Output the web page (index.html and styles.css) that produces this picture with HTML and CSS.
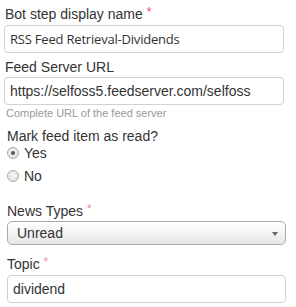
FILE: index.html
```html
<!DOCTYPE html>
<html lang="en">
<head>
    <meta charset="UTF-8">
    <title>Bot step settings</title>
    <link rel="stylesheet" href="styles.css">
</head>
<body>
    <div class="form">
        <div class="section top">
            <label class="field-label first">Bot step display name <span class="req">*</span></label>
            <input class="text-input alt" type="text" value="RSS Feed Retrieval-Dividends">

            <label class="field-label second">Feed Server URL</label>
            <input class="text-input url" type="text" value="https://selfoss5.feedserver.com/selfoss">
            <div class="help">Complete URL of the feed server</div>
        </div>

        <div class="section bottom">
            <div class="field-label mark">Mark feed item as read?</div>
            <div class="radio-row yes">
                <span class="radio checked"></span> Yes
            </div>
            <div class="radio-row no">
                <span class="radio"></span> No
            </div>

            <label class="field-label news">News Types <span class="req light">*</span></label>
            <div class="select">
                <span>Unread</span>
                <span class="arrow"></span>
            </div>

            <label class="field-label topic">Topic <span class="req light">*</span></label>
            <input class="text-input" type="text" value="dividend">
        </div>
    </div>
</body>
</html>
```

FILE: styles.css
```css
body {
    margin: 0;
    font-family: "Liberation Sans", Arial, sans-serif;
    color: #333;
    background: #fff;
}
.form {
    width: 296px;
}
.section.top {
    padding: 0 12px 0 4px;
}
.section.bottom {
    padding: 0 10px 0 7px;
}
.field-label {
    display: block;
    font-size: 14px;
    line-height: 16px;
    color: #333;
}
.field-label.first {
    padding-top: 6px;
    padding-left: 1px;
    margin-bottom: 3px;
}
.field-label.second {
    margin-top: 6px;
    margin-bottom: 2px;
    padding-left: 1px;
}
.field-label.mark {
    margin-top: 8px;
}
.field-label.news {
    margin-top: 19px;
    margin-bottom: 2px;
}
.field-label.topic {
    margin-top: 11px;
    margin-bottom: 3px;
}
.req {
    color: #e8476f;
    font-size: 12px;
    vertical-align: top;
    line-height: 12px;
}
.req.light {
    color: #f08aa2;
}
.text-input {
    display: block;
    box-sizing: border-box;
    width: 100%;
    height: 28px;
    margin: 0;
    padding: 0 6px 0 5px;
    border: 1px solid #d2d2d2;
    border-radius: 4px;
    font-family: "Liberation Sans", Arial, sans-serif;
    font-size: 14px;
    color: #333;
    background: #fff;
    outline: none;
}
.text-input.alt {
    font-family: "Open Sans", sans-serif;
    font-size: 13px;
    letter-spacing: -0.2px;
}
.help {
    font-size: 11px;
    line-height: 13px;
    color: #999;
    margin-top: 2px;
    padding-left: 2px;
}
.radio-row {
    display: flex;
    align-items: center;
    font-size: 14px;
    line-height: 16px;
    height: 16px;
    gap: 5px;
}
.radio-row.yes {
    margin-top: 1px;
}
.radio-row.no {
    margin-top: 7px;
}
.radio {
    box-sizing: border-box;
    width: 12px;
    height: 12px;
    border-radius: 50%;
    border: 1px solid #a9a9a9;
    background: radial-gradient(circle at 50% 40%, #f7f7f7, #dcdcdc);
    position: relative;
}
.radio.checked::after {
    content: "";
    position: absolute;
    left: 3px;
    top: 3px;
    width: 4px;
    height: 4px;
    border-radius: 50%;
    background: #555;
}
.select {
    box-sizing: border-box;
    height: 24px;
    border: 1px solid #aaa;
    border-radius: 5px;
    background: linear-gradient(#ffffff 0%, #f4f4f4 50%, #e6e6e6 100%);
    display: flex;
    align-items: center;
    justify-content: space-between;
    padding: 0 7px 0 9px;
    font-size: 14px;
    color: #333;
}
.arrow {
    width: 0;
    height: 0;
    border-left: 3px solid transparent;
    border-right: 3px solid transparent;
    border-top: 4px solid #666;
    margin-top: 2px;
}
```
